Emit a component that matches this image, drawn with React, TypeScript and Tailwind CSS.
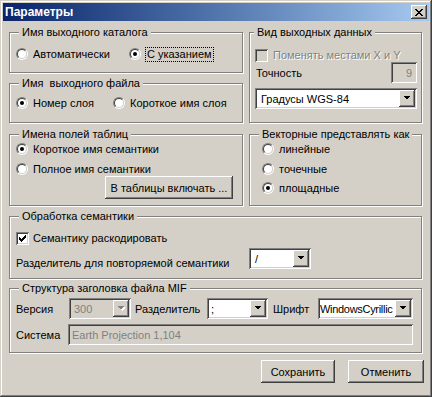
import type { ReactNode } from "react";

const raised =
  "shadow-[inset_-1px_-1px_0_#404040,inset_1px_1px_0_#ffffff,inset_-2px_-2px_0_#808080,inset_2px_2px_0_#d4d0c8]";
const sunken =
  "shadow-[inset_1px_1px_0_#808080,inset_-1px_-1px_0_#ffffff,inset_2px_2px_0_#404040,inset_-2px_-2px_0_#d4d0c8]";

const closeX = ["##....##", ".##..##.", "..####..", "...##...", "..####..", ".##..##.", "##....##"];

const CloseButton = () => (
  <span className={`flex h-[14px] w-[16px] items-center justify-center bg-[#d4d0c8] ${raised}`}>
    <svg width="8" height="7" viewBox="0 0 8 7" shapeRendering="crispEdges">
      {closeX.map((row, y) =>
        row.split("").map((c, x) => (c === "#" ? <rect key={`${x}-${y}`} x={x} y={y} width="1" height="1" fill="#000" /> : null))
      )}
    </svg>
  </span>
);

type GroupProps = {
  title: string;
  className: string;
  labelClass?: string;
  children: ReactNode;
};

const Group = ({ title, className, labelClass = "ml-[9px]", children }: GroupProps) => (
  <div
    className={`flex shrink-0 flex-col border border-[#808080] shadow-[inset_1px_1px_0_#ffffff,1px_1px_0_#ffffff] ${className}`}
  >
    <span className={`-mt-[8px] w-fit bg-[#d4d0c8] px-[3px] leading-[14px] whitespace-pre ${labelClass}`}>{title}</span>
    {children}
  </div>
);

type RadioProps = {
  label: string;
  checked?: boolean;
  focus?: boolean;
  className?: string;
};

const Radio = ({ label, checked, focus, className = "" }: RadioProps) => (
  <div className={`flex h-[14px] items-center ${focus ? "gap-[4px]" : "gap-[5px]"} ${className}`}>
    <span className="flex h-[12px] w-[12px] shrink-0 rounded-full border border-t-[#808080] border-l-[#808080] border-r-[#ffffff] border-b-[#ffffff]">
      <span className="flex h-full w-full items-center justify-center rounded-full border border-t-[#404040] border-l-[#404040] border-r-[#d4d0c8] border-b-[#d4d0c8] bg-white">
        {checked && <span className="h-[4px] w-[4px] rounded-full bg-black" />}
      </span>
    </span>
    {focus ? (
      <span className="border border-dotted border-black pr-[1px] pl-[1px] leading-[13px]">{label}</span>
    ) : (
      <span>{label}</span>
    )}
  </div>
);

const Check = ({ checked, disabled }: { checked?: boolean; disabled?: boolean }) => (
  <span
    className={`flex h-[13px] w-[13px] shrink-0 items-center justify-center ${sunken} ${
      disabled ? "bg-[#d4d0c8]" : "bg-white"
    }`}
  >
    {checked && (
      <svg width="7" height="7" viewBox="0 0 7 7" shapeRendering="crispEdges">
        <path d="M0 2h1v1h1v1h1v-1h1v-1h1v-1h1v-1h1v3h-1v1h-1v1h-1v1h-1v1h-1v-1h-1v-1h-1z" fill="#000" />
      </svg>
    )}
  </span>
);

type ComboProps = {
  value: string;
  className: string;
  disabled?: boolean;
  textClass?: string;
};

const Combo = ({ value, className, disabled, textClass = "pl-[3px]" }: ComboProps) => (
  <div
    className={`flex h-[21px] shrink-0 items-center p-[2px] ${sunken} ${
      disabled ? "bg-[#d4d0c8] text-[#808080]" : "bg-white"
    } ${className}`}
  >
    <span className={`min-w-0 flex-1 overflow-hidden whitespace-nowrap ${textClass}`}>{value}</span>
    <span className={`flex h-[17px] w-[16px] shrink-0 items-center justify-center bg-[#d4d0c8] ${raised}`}>
      <svg width="8" height="5" viewBox="0 0 8 5" shapeRendering="crispEdges">
        {disabled && <path d="M2 1h7l-3.5 4z" fill="#ffffff" />}
        <path d="M0.5 0h7l-3.5 4z" fill={disabled ? "#808080" : "#000"} />
      </svg>
    </span>
  </div>
);

const Button = ({ label, className }: { label: string; className: string }) => (
  <div className={`flex h-[23px] shrink-0 items-center justify-center bg-[#d4d0c8] ${raised} ${className}`}>
    {label}
  </div>
);

export default function App() {
  return (
    <div className="h-[397px] w-[432px] bg-[#d4d0c8] p-[3px] font-['Liberation_Sans',Arial,sans-serif] text-[11px] leading-[14px] text-black shadow-[inset_-1px_-1px_0_#404040,inset_1px_1px_0_#d4d0c8,inset_-2px_-2px_0_#808080,inset_2px_2px_0_#ffffff]">
      <div className="flex h-[18px] items-center justify-between bg-gradient-to-r from-[#0a246a] to-[#a6caf0] px-[2px]">
        <span className="text-[12px] font-bold text-white">Параметры</span>
        <CloseButton />
      </div>

      <div className="flex flex-col pt-[11px] pl-[6px]">
        <div className="flex gap-[6px]">
          <div className="flex w-[234px] flex-col gap-[10px]">
            <Group title="Имя выходного каталога" className="h-[41px]">
              <div className="mt-[8px] flex pl-[6px]">
                <Radio label="Автоматически" className="w-[113px]" />
                <Radio label="С указанием" checked focus />
              </div>
            </Group>
            <Group title={"Имя  выходного файла"} className="h-[40px]">
              <div className="mt-[6px] flex pl-[6px]">
                <Radio label="Номер слоя" checked className="w-[97px]" />
                <Radio label="Короткое имя слоя" />
              </div>
            </Group>
          </div>

          <Group title="Вид выходных данных" className="h-[91px] w-[173px]" labelClass="ml-[4px]">
            <div className="mt-[9px] flex h-[14px] items-center gap-[5px] pl-[5px]">
              <Check disabled />
              <span className="text-[#808080] [text-shadow:1px_1px_0_#ffffff]">Поменять местами X и Y</span>
            </div>
            <div className="flex h-[21px] items-center justify-between pr-[4px] pl-[6px]">
              <span>Точность</span>
              <div className={`flex h-[21px] w-[26px] items-center justify-end bg-[#d4d0c8] pr-[5px] text-[#808080] ${sunken}`}>
                9
              </div>
            </div>
            <Combo value="Градусы WGS-84" className="mt-[5px] ml-[5px] w-[162px]" textClass="pl-[4px]" />
          </Group>
        </div>

        <div className="mt-[11px] flex gap-[6px]">
          <Group title="Имена полей таблиц" className="h-[72px] w-[234px]">
            <Radio label="Короткое имя семантики" checked className="mt-[1px] ml-[6px]" />
            <Radio label="Полное имя семантики" className="mt-[6px] ml-[6px]" />
            <Button label="В таблицы включать ..." className="mr-[9px] w-[128px] self-end" />
          </Group>

          <Group title="Векторные представлять как" className="h-[72px] w-[173px]">
            <Radio label="линейные" className="mt-[1px] ml-[12px]" />
            <Radio label="точечные" className="mt-[6px] ml-[12px]" />
            <Radio label="площадные" checked className="mt-[5px] ml-[12px]" />
          </Group>
        </div>

        <Group title="Обработка семантики" className="mt-[10px] h-[63px] w-[413px]">
          <div className="mt-[8px] ml-[6px] flex h-[14px] items-center gap-[4px]">
            <Check checked />
            <span>Семантику раскодировать</span>
          </div>
          <div className="mt-[3px] ml-[6px] flex items-start">
            <span className="mt-[8px] w-[233px]">Разделитель для повторяемой семантики</span>
            <Combo value="/" className="w-[62px]" textClass="pl-[4px]" />
          </div>
        </Group>

        <Group title="Структура заголовка файла MIF" className="mt-[9px] h-[65px] w-[413px]">
          <div className="mt-[3px] ml-[6px] flex h-[21px] items-center">
            <span className="w-[53px]">Версия</span>
            <Combo value="300" disabled className="w-[62px]" textClass="pl-[3px]" />
            <span className="ml-[4px] w-[72px]">Разделитель</span>
            <Combo value=";" className="w-[61px]" textClass="pl-[2px]" />
            <span className="ml-[5px] w-[45px]">Шрифт</span>
            <Combo value="WindowsCyrillic" className="w-[95px]" textClass="pl-0 tracking-[-0.3px]" />
          </div>
          <div className="mt-[5px] ml-[6px] flex items-center">
            <span className="w-[52px]">Система</span>
            <div className={`flex h-[21px] w-[345px] items-center bg-[#d4d0c8] pl-[4px] text-[#808080] ${sunken}`}>
              Earth Projection 1,104
            </div>
          </div>
        </Group>

        <div className="mt-[7px] flex w-[415px] justify-end gap-[13px]">
          <Button label="Сохранить" className="w-[74px]" />
          <Button label="Отменить" className="w-[76px]" />
        </div>
      </div>
    </div>
  );
}
